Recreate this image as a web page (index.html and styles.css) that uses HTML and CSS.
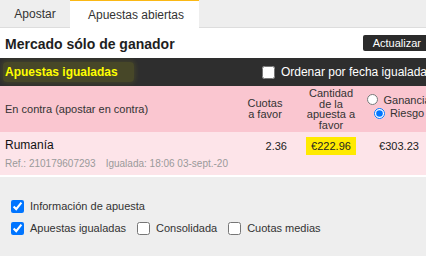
FILE: index.html
```html
<!DOCTYPE html>
<html lang="es">
<head>
<meta charset="utf-8">
<link rel="stylesheet" href="styles.css">
</head>
<body>
<div class="page">
  <nav class="tabs">
    <div class="tab">Apostar</div>
    <div class="tab active">Apuestas abiertas</div>
  </nav>
  <div class="title-row">
    <h1 class="title">Mercado sólo de ganador</h1>
    <button class="btn">Actualizar</button>
  </div>
  <div class="bar">
    <span class="bar-title">Apuestas igualadas</span>
    <label class="sort"><input type="checkbox" class="chk">Ordenar por fecha igualada</label>
  </div>
  <div class="grid head">
    <div class="cell name-h">En contra (apostar en contra)</div>
    <div class="cell odds-h">Cuotas a favor</div>
    <div class="cell stake-h">Cantidad de la apuesta a favor</div>
    <div class="cell radios">
      <label class="radio-line"><input type="radio" name="m" class="rad">Ganancia</label>
      <label class="radio-line"><input type="radio" name="m" class="rad" checked>Riesgo</label>
    </div>
  </div>
  <div class="grid row">
    <div class="cell name">
      <div class="runner">Rumanía</div>
      <div class="ref"><span>Ref.: 210179607293</span><span>Igualada: 18:06 03-sept.-20</span></div>
    </div>
    <div class="cell num odds">2.36</div>
    <div class="cell num stake"><span class="hl">€222.96</span></div>
    <div class="cell num risk">€303.23</div>
  </div>
  <div class="options">
    <div class="opt-row">
      <label class="opt"><input type="checkbox" class="chk" checked>Información de apuesta</label>
    </div>
    <div class="opt-row">
      <label class="opt"><input type="checkbox" class="chk" checked>Apuestas igualadas</label>
      <label class="opt"><input type="checkbox" class="chk">Consolidada</label>
      <label class="opt"><input type="checkbox" class="chk">Cuotas medias</label>
    </div>
  </div>
</div>
</body>
</html>
```
FILE: styles.css
```css
html, body {
  margin: 0;
  padding: 0;
  background: #eeeeee;
  overflow: hidden;
  font-family: "Liberation Sans", Arial, sans-serif;
}
.page {
  width: 432px;
}
.tabs {
  display: flex;
  height: 28px;
  box-sizing: border-box;
  background: #eeeeee;
  border-bottom: 1px solid #dddddd;
}
.tab {
  width: 70px;
  display: flex;
  align-items: center;
  justify-content: center;
  font-size: 12px;
  color: #333333;
  box-sizing: border-box;
}
.tab.active {
  width: 129px;
  height: 28px;
  background: #ffffff;
  border-top: 1px solid #fbb814;
  padding-left: 3px;
}
.title-row {
  height: 30px;
  background: #ffffff;
  display: flex;
  align-items: center;
  justify-content: space-between;
  padding: 0 1px 0 5px;
}
.title {
  margin: 0;
  font-size: 14px;
  font-weight: bold;
  color: #1e1e1e;
  line-height: 16px;
  padding-top: 1px;
}
.btn {
  height: 16px;
  border: 0;
  border-radius: 2px;
  background: #2b2b2b;
  color: #ffffff;
  font-family: inherit;
  font-size: 11px;
  padding: 0 10px;
  line-height: 16px;
}
.bar {
  height: 28px;
  background: #2e2e2e;
  display: flex;
  align-items: center;
  justify-content: space-between;
  padding: 0 5px 0 3px;
}
.bar-title {
  font-size: 12px;
  font-weight: bold;
  color: #ffff00;
  line-height: 14px;
  padding: 3px 16px 3px 2px;
  background: rgba(255, 255, 0, 0.12);
  box-shadow: 0 0 4px 2px rgba(255, 255, 0, 0.08);
  border-radius: 4px;
}
.sort {
  display: flex;
  align-items: center;
  font-size: 12px;
  color: #ffffff;
  white-space: nowrap;
}
.chk {
  width: 13px;
  height: 13px;
  margin: 0 6px 0 0;
}
.grid {
  display: grid;
  grid-template-columns: 1fr 56px 78px 58px;
  padding-right: 4px;
}
.head {
  height: 46px;
  background: #fac6d0;
  align-items: center;
  font-size: 11px;
  color: #333333;
}
.name-h {
  padding-left: 5px;
}
.odds-h {
  padding: 0 5px 0 7px;
  text-align: center;
  line-height: 11px;
}
.stake-h {
  padding: 0 13px;
  text-align: center;
  line-height: 10.5px;
}
.radios {
  align-self: start;
  padding-top: 7px;
  display: flex;
  flex-direction: column;
  align-items: center;
}
.radio-line {
  display: flex;
  align-items: center;
  height: 13.5px;
  white-space: nowrap;
}
.rad {
  width: 11px;
  height: 11px;
  margin: 0 5px 0 0;
}
.row {
  background: #fde4e9;
  border-bottom: 2px solid #ffffff;
  align-items: start;
}
.name {
  padding: 6px 0 5px 5px;
}
.runner {
  font-size: 12px;
  line-height: 14px;
  color: #111111;
}
.ref {
  margin-top: 6px;
  font-size: 10px;
  line-height: 12px;
  color: #9a9a9a;
  display: flex;
  gap: 10px;
  white-space: nowrap;
}
.num {
  font-size: 11px;
  line-height: 14px;
  color: #222222;
  padding-top: 7px;
}
.odds {
  text-align: right;
  padding-right: 5px;
}
.stake {
  text-align: center;
  padding-top: 5px;
}
.hl {
  display: inline-block;
  background: #ffea00;
  padding: 2px 5px;
}
.risk {
  text-align: center;
}
.options {
  padding: 18px 11px;
}
.opt-row {
  display: flex;
  align-items: center;
  height: 22px;
  gap: 11px;
}
.opt {
  display: flex;
  align-items: center;
  font-size: 11px;
  color: #333333;
}
```
